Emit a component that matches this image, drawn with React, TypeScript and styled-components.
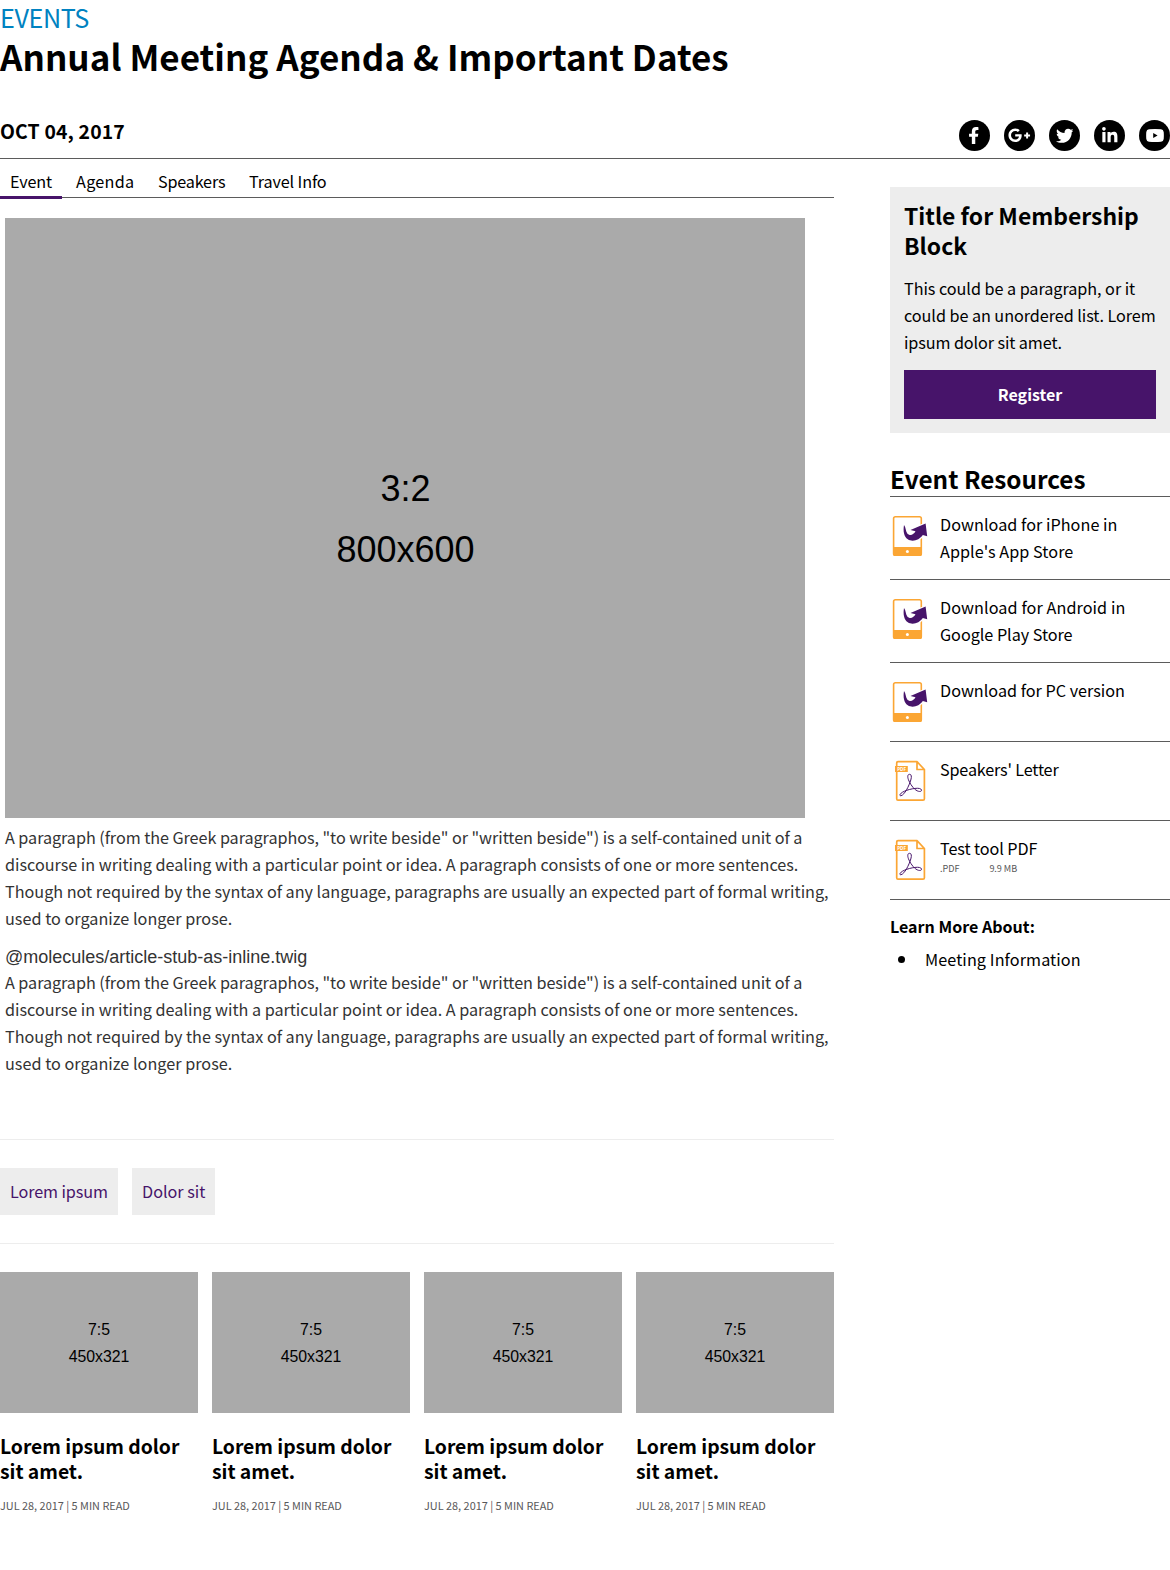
import React from "react";
import styled, { createGlobalStyle, css } from "styled-components";
import { FaFacebookF, FaGooglePlusG, FaLinkedinIn, FaTwitter } from "react-icons/fa";

const purple = "#47146a";
const line = "#5b5b5b";
const pale = "#ededed";
const orange = "#fba634";

const GlobalStyle = createGlobalStyle`
  *, *::before, *::after { box-sizing: border-box; }
  body { margin: 0; background: #fff; }
  h1, h2, h3, p, ul { margin: 0; padding: 0; }
  ul { list-style: none; }
`;

const tracking = css<{ $track?: number }>`
  letter-spacing: ${({ $track = 0 }) => $track}px;
`;

const Page = styled.div`
  width: 1170px;
  min-height: 1570px;
  color: #000;
  font-family: "Noto Sans CJK SC", "Open Sans", sans-serif;
  font-size: 16.2px;
  line-height: 27px;
`;

const Kicker = styled.div`
  color: #0082c1;
  font-size: 25.2px;
  line-height: 34px;
  letter-spacing: -0.4px;
`;

const PageTitle = styled.h1`
  padding-top: 1px;
  font-size: 35px;
  font-weight: 700;
  line-height: 42px;
  letter-spacing: 0.02px;
`;

const MetaBar = styled.div`
  display: flex;
  justify-content: space-between;
  align-items: flex-start;
  height: 39px;
  margin-top: 43px;
  border-bottom: 1px solid ${line};
`;

const EventDate = styled.div`
  font-size: 19.4px;
  font-weight: 600;
  line-height: 21px;
  letter-spacing: 0.14px;
`;

const SocialList = styled.ul`
  display: flex;
  gap: 14px;
`;

const SocialLink = styled.li<{ $nudge?: number }>`
  display: flex;
  align-items: center;
  justify-content: center;
  width: 31px;
  height: 31px;
  padding-right: ${({ $nudge = 0 }) => $nudge}px;
  border-radius: 50%;
  background: #000;
  color: #fff;
`;

const Columns = styled.div`
  display: grid;
  grid-template-columns: 834px 280px;
  justify-content: space-between;
  align-items: start;
`;

const Tabs = styled.ul`
  display: flex;
  gap: 4px;
  height: 39px;
  border-bottom: 1px solid ${line};
`;

const Tab = styled.li<{ $active?: boolean; $track?: number; $width: number }>`
  width: ${({ $width }) => $width}px;
  height: 40px;
  padding: 9px 0 0 10px;
  white-space: nowrap;
  border-bottom: ${({ $active }) => ($active ? `3px solid ${purple}` : "0")};
  ${tracking}
`;

const Article = styled.article`
  padding: 20px 0 62px 5px;
  color: #333;
`;

const Placeholder = styled.div<{ $large?: boolean }>`
  display: flex;
  flex-direction: column;
  align-items: center;
  justify-content: center;
  width: ${({ $large }) => ($large ? "800px" : "100%")};
  height: ${({ $large }) => ($large ? "600px" : "141px")};
  padding: ${({ $large }) => ($large ? "1px 0 0 1px" : "0")};
  background: #aaa;
  color: #000;
  font-family: "Liberation Sans", Arial, sans-serif;
  font-size: ${({ $large }) => ($large ? "36px" : "15.84px")};
  line-height: ${({ $large }) => ($large ? "61px" : "27px")};
`;

const Paragraph = styled.p`
  padding-top: 6px;
`;

const CopyLine = styled.span<{ $track?: number }>`
  display: block;
  white-space: nowrap;
  ${tracking}
`;

const TemplateName = styled.div`
  margin: 15px 0 -4px;
  font-family: "Liberation Sans", Arial, sans-serif;
  font-size: 18px;
  line-height: 20px;
`;

const TagRow = styled.ul`
  display: flex;
  gap: 14px;
  padding: 28px 0;
  border-top: 1px solid ${pale};
  border-bottom: 1px solid ${pale};
`;

const Tag = styled.li<{ $width: number; $track?: number }>`
  width: ${({ $width }) => $width}px;
  padding: 10px 0 10px 10px;
  background: ${pale};
  color: ${purple};
  white-space: nowrap;
  ${tracking}
`;

const CardGrid = styled.div`
  display: grid;
  grid-template-columns: repeat(4, 1fr);
  gap: 14px;
  padding-top: 28px;
`;

const Card = styled.div``;

const CardTitle = styled.h3`
  margin: 21px 0 13px;
  font-size: 19.35px;
  font-weight: 600;
  line-height: 25px;
  letter-spacing: -0.03px;
`;

const CardMeta = styled.div`
  color: #58585a;
  font-size: 10.9px;
  line-height: 17px;
`;

const Sidebar = styled.aside`
  padding-top: 28px;
`;

const Membership = styled.section`
  padding: 13px 14px 14px;
  background: ${pale};
`;

const MembershipTitle = styled.h2`
  margin-bottom: 15px;
  font-size: 22.9px;
  font-weight: 600;
  line-height: 30px;
`;

const RegisterButton = styled.button`
  display: block;
  width: 100%;
  height: 49px;
  margin-top: 14px;
  padding: 0;
  border: 0;
  background: ${purple};
  color: #fff;
  font: 600 16px/27px "Noto Sans CJK SC", "Open Sans", sans-serif;
`;

const ResourcesTitle = styled.h2`
  height: 33px;
  margin-top: 31px;
  border-bottom: 1px solid ${line};
  font-size: 24.3px;
  font-weight: 600;
  line-height: 30px;
`;

const Resource = styled.li`
  display: flex;
  padding: 14px 0;
  border-bottom: 1px solid ${line};

  svg {
    flex: none;
    display: block;
  }
`;

const FileMeta = styled.div`
  display: flex;
  gap: 30px;
  color: #58585a;
  font-size: 9.1px;
  line-height: 12px;
  letter-spacing: -0.05px;
`;

const LearnTitle = styled.h3`
  margin: 13px 0 6px;
  font-size: 16.05px;
  font-weight: 600;
  line-height: 27px;
`;

const TopicItem = styled.li`
  display: flex;
  align-items: center;
  letter-spacing: 0.09px;

  &::before {
    content: "";
    width: 7px;
    height: 7px;
    margin: 0 20px 0 8px;
    border-radius: 50%;
    background: #000;
  }
`;

const YoutubeGlyph = () => (
  <svg width="18" height="13" viewBox="0 0 18 13">
    <path
      fillRule="evenodd"
      fill="currentColor"
      d="M3 .3Q9-.2 15 .3Q17.4.5 17.7 3Q18 6.500 17.700 10Q17.400 12.500 15 12.700Q9 13.200 3 12.700Q.6 12.500.3 10Q0 6.500.3 3Q.6.500 3 .3ZM7.200 4V9L11.600 6.500Z"
    />
  </svg>
);

const PhoneIcon = () => (
  <svg width="50" height="50" viewBox="0 0 50 50">
    <rect x="3.600" y="5.700" width="27.700" height="38.500" rx="1.800" fill="#fff" stroke={orange} strokeWidth="1.600" />
    <path d="M3 36H32V43Q32 45 30 45H5Q3 45 3 43Z" fill={orange} />
    <circle cx="17.400" cy="40.500" r="1.500" fill="#fff" />
    <path
      d="M14 14C13 20 13.800 25.500 17.800 28.300C22.500 31.500 29.500 29 32.800 24L37.200 25.200L35.600 12.600L20.500 19L25.500 20.300C24 23.500 20 25.500 17.300 22.500C15.500 20.300 16 16.500 14 14Z"
      fill={purple}
      stroke="#fff"
      strokeWidth="2.400"
      paintOrder="stroke"
    />
  </svg>
);

const PdfIcon = () => (
  <svg width="50" height="50" viewBox="0 0 50 50">
    <path
      d="M8 5.700H27L34.400 13.500V42.700Q34.400 44.100 33 44.100H8Q6.700 44.100 6.700 42.700V7Q6.700 5.700 8 5.700ZM27 5.700V13.500H34.400"
      fill="#fff"
      stroke={orange}
      strokeWidth="1.700"
      strokeLinejoin="round"
    />
    <rect x="5" y="10" width="12.800" height="6" fill={orange} />
    <text x="7.200" y="14.800" fill="#fff" fontFamily="Open Sans, sans-serif" fontWeight="700" fontSize="4.600">
      PDF
    </text>
    <path
      d="M19.500 18.300C17.300 18.300 17.300 21.500 19 25C21 29.500 25 34.500 28.500 35.300C31.500 36 32.300 34.300 30.800 33C28 31 17 33.500 12.500 36.200C9.500 38 9.200 40 11 39.700C14.500 39 19 30 20.800 24C21.800 20.500 21.500 18.300 19.500 18.300Z"
      fill="none"
      stroke={purple}
      strokeWidth="1"
    />
  </svg>
);

const tabs = [
  { label: "Event", width: 62, track: -0.14, active: true },
  { label: "Agenda", width: 78, track: 0.3 },
  { label: "Speakers", width: 87, track: -0.2 },
  { label: "Travel Info", width: 97, track: -0.12 },
];

const copy = [
  { text: 'A paragraph (from the Greek paragraphos, "to write beside" or "written beside") is a self-contained unit of a', track: -0.055 },
  { text: "discourse in writing dealing with a particular point or idea. A paragraph consists of one or more sentences.", track: -0.012 },
  { text: "Though not required by the syntax of any language, paragraphs are usually an expected part of formal writing,", track: 0 },
  { text: "used to organize longer prose.", track: 0.02 },
];

const Copy = () => (
  <Paragraph>
    {copy.map(({ text, track }) => (
      <CopyLine key={text} $track={track}>
        {text}
      </CopyLine>
    ))}
  </Paragraph>
);

export default function App() {
  return (
    <Page>
      <GlobalStyle />
      <header>
        <Kicker>EVENTS</Kicker>
        <PageTitle>Annual Meeting Agenda &amp; Important Dates</PageTitle>
        <MetaBar>
          <EventDate>OCT 04, 2017</EventDate>
          <SocialList>
            <SocialLink $nudge={1.5}><FaFacebookF size={17.5} /></SocialLink>
            <SocialLink><FaGooglePlusG size={22.5} /></SocialLink>
            <SocialLink><FaTwitter size={17.5} /></SocialLink>
            <SocialLink><FaLinkedinIn size={17.5} /></SocialLink>
            <SocialLink><YoutubeGlyph /></SocialLink>
          </SocialList>
        </MetaBar>
      </header>

      <Columns>
        <main>
          <Tabs>
            {tabs.map((tab) => (
              <Tab key={tab.label} $active={tab.active} $track={tab.track} $width={tab.width}>
                {tab.label}
              </Tab>
            ))}
          </Tabs>
          <Article>
            <Placeholder $large>
              <span>3:2</span>
              <span>800x600</span>
            </Placeholder>
            <Copy />
            <TemplateName>@molecules/article-stub-as-inline.twig</TemplateName>
            <Copy />
          </Article>
          <TagRow>
            <Tag $width={118} $track={-0.1}>Lorem ipsum</Tag>
            <Tag $width={83}>Dolor sit</Tag>
          </TagRow>
          <CardGrid>
            {[0, 1, 2, 3].map((n) => (
              <Card key={n}>
                <Placeholder>
                  <span>7:5</span>
                  <span>450x321</span>
                </Placeholder>
                <CardTitle>Lorem ipsum dolor<br />sit amet.</CardTitle>
                <CardMeta>JUL 28, 2017 | 5 MIN READ</CardMeta>
              </Card>
            ))}
          </CardGrid>
        </main>

        <Sidebar>
          <Membership>
            <MembershipTitle>Title for Membership<br />Block</MembershipTitle>
            <p>
              <CopyLine $track={-0.04}>This could be a paragraph, or it</CopyLine>
              <CopyLine $track={-0.05}>could be an unordered list. Lorem</CopyLine>
              <CopyLine $track={-0.1}>ipsum dolor sit amet.</CopyLine>
            </p>
            <RegisterButton>Register</RegisterButton>
          </Membership>

          <ResourcesTitle>Event Resources</ResourcesTitle>
          <ul>
            <Resource>
              <PhoneIcon />
              <div>
                <CopyLine $track={0.04}>Download for iPhone in</CopyLine>
                <CopyLine $track={0.06}>Apple's App Store</CopyLine>
              </div>
            </Resource>
            <Resource>
              <PhoneIcon />
              <div>
                <CopyLine $track={0.08}>Download for Android in</CopyLine>
                <CopyLine $track={-0.03}>Google Play Store</CopyLine>
              </div>
            </Resource>
            <Resource>
              <PhoneIcon />
              <CopyLine>Download for PC version</CopyLine>
            </Resource>
            <Resource>
              <PdfIcon />
              <CopyLine $track={-0.17}>Speakers' Letter</CopyLine>
            </Resource>
            <Resource>
              <PdfIcon />
              <div>
                <CopyLine $track={-0.08}>Test tool PDF</CopyLine>
                <FileMeta>
                  <span>.PDF</span>
                  <span>9.9 MB</span>
                </FileMeta>
              </div>
            </Resource>
          </ul>
          <LearnTitle>Learn More About:</LearnTitle>
          <ul>
            <TopicItem>Meeting Information</TopicItem>
          </ul>
        </Sidebar>
      </Columns>
    </Page>
  );
}
